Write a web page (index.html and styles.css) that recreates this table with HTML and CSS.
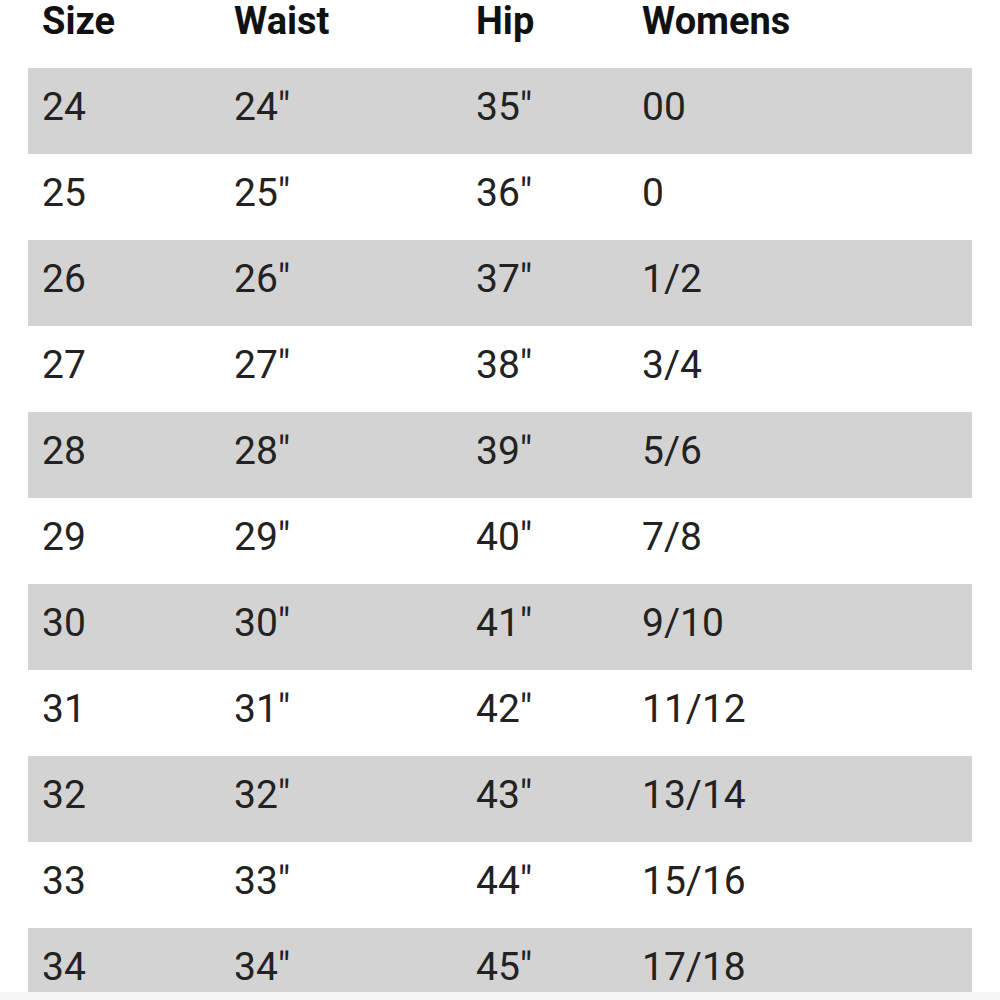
FILE: index.html
```html
<!DOCTYPE html>
<html>
<head>
<meta charset="utf-8">
<link rel="stylesheet" href="styles.css">
</head>
<body>
<div class="page">
  <div class="chart">
    <div class="row head"><div>Size</div><div>Waist</div><div>Hip</div><div>Womens</div></div>
    <div class="row shade"><div>24</div><div>24"</div><div>35"</div><div>00</div></div>
    <div class="row"><div>25</div><div>25"</div><div>36"</div><div>0</div></div>
    <div class="row shade"><div>26</div><div>26"</div><div>37"</div><div>1/2</div></div>
    <div class="row"><div>27</div><div>27"</div><div>38"</div><div>3/4</div></div>
    <div class="row shade"><div>28</div><div>28"</div><div>39"</div><div>5/6</div></div>
    <div class="row"><div>29</div><div>29"</div><div>40"</div><div>7/8</div></div>
    <div class="row shade"><div>30</div><div>30"</div><div>41"</div><div>9/10</div></div>
    <div class="row"><div>31</div><div>31"</div><div>42"</div><div>11/12</div></div>
    <div class="row shade"><div>32</div><div>32"</div><div>43"</div><div>13/14</div></div>
    <div class="row"><div>33</div><div>33"</div><div>44"</div><div>15/16</div></div>
    <div class="row shade"><div>34</div><div>34"</div><div>45"</div><div>17/18</div></div>
  </div>
  <div class="strip"></div>
</div>
</body>
</html>
```
FILE: styles.css
```css
html, body {
  margin: 0;
  padding: 0;
  background: #ffffff;
}
.page {
  width: 1000px;
  height: 1000px;
  display: flex;
  flex-direction: column;
  overflow: hidden;
  font-family: Roboto, "Liberation Sans", sans-serif;
  color: #222222;
}
.chart {
  height: 992px;
  overflow: hidden;
  padding: 0 28px;
}
.row {
  display: grid;
  grid-template-columns: 192px 242px 166px 1fr;
  padding-left: 14px;
  height: 86px;
  box-sizing: border-box;
  font-size: 39px;
  line-height: 79px;
  padding-bottom: 7px;
}
.row.head {
  height: 68px;
  font-size: 38px;
  font-weight: 700;
  line-height: 42px;
  padding-bottom: 26px;
  color: #111111;
}
.row.shade {
  background: #d3d3d3;
}
.strip {
  flex: 1;
  background: #f5f5f5;
}
```
